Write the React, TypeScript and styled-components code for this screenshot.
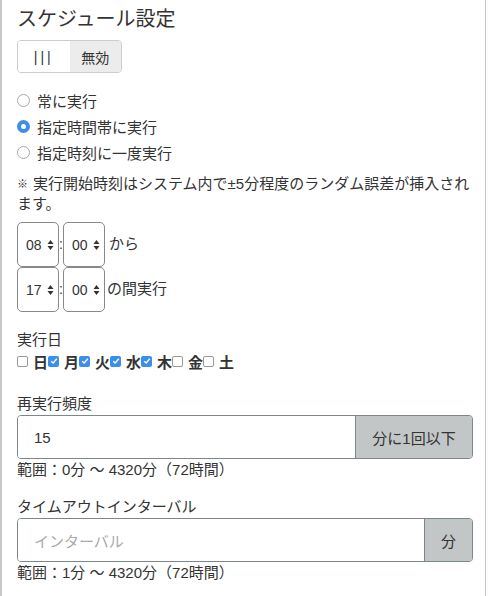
import * as React from 'react';
import styled, { createGlobalStyle } from 'styled-components';

const GlobalStyle = createGlobalStyle`
  html, body {
    margin: 0;
    padding: 0;
    background: #fff;
  }
  body {
    font-family: "Liberation Sans", "Noto Sans CJK JP", sans-serif;
    color: #333;
    font-size: 15px;
  }
`;

const days = [
  { label: '日', checked: false },
  { label: '月', checked: true },
  { label: '火', checked: true },
  { label: '水', checked: true },
  { label: '木', checked: true },
  { label: '金', checked: false },
  { label: '土', checked: false },
];

const radios = [
  { label: '常に実行', checked: false },
  { label: '指定時間帯に実行', checked: true },
  { label: '指定時刻に一度実行', checked: false },
];

const Spinner = () => (
  <svg width="7" height="12" viewBox="0 0 7 12">
    <path d="M3.5 1 L6.5 5 L0.5 5 Z" fill="#333" />
    <path d="M3.5 11 L6.5 7 L0.5 7 Z" fill="#333" />
  </svg>
);

const TimeSelect: React.FC<{ value: string }> = ({ value }) => (
  <SelectBox>
    <span>{value}</span>
    <Spinner />
  </SelectBox>
);

const App: React.FC = () => {
  return (
    <>
      <GlobalStyle />
      <Panel>
        <Title>スケジュール設定</Title>
        <Toggle>
          <ToggleHalf>|||</ToggleHalf>
          <ToggleHalf $off>無効</ToggleHalf>
        </Toggle>

        <RadioList>
          {radios.map((r) => (
            <RadioRow key={r.label}>
              <RadioDot $checked={r.checked} />
              {r.label}
            </RadioRow>
          ))}
        </RadioList>

        <Note>
          <Mark>※</Mark>
          <span>実行開始時刻はシステム内で±5分程度のランダム誤差が挿入され</span>
          <br />
          <span>ます。</span>
        </Note>

        <TimeBlock>
          <TimeRow>
            <TimeSelect value="08" />
            <Colon>:</Colon>
            <TimeSelect value="00" />
            <TimeText>から</TimeText>
          </TimeRow>
          <TimeRow>
            <TimeSelect value="17" />
            <Colon>:</Colon>
            <TimeSelect value="00" />
            <TimeText $tight>の間実行</TimeText>
          </TimeRow>
        </TimeBlock>

        <Label $top={18}>実行日</Label>
        <DayRow>
          {days.map((d) => (
            <DayItem key={d.label}>
              <CheckBox $checked={d.checked}>
                {d.checked && (
                  <svg width="8" height="8" viewBox="0 0 8 8">
                    <path d="M1.2 4.2 L3.2 6 L6.8 1.8" stroke="#fff" strokeWidth="1.4" fill="none" />
                  </svg>
                )}
              </CheckBox>
              <DayLabel>{d.label}</DayLabel>
            </DayItem>
          ))}
        </DayRow>

        <Label $top={22}>再実行頻度</Label>
        <InputGroup>
          <TextInput>15</TextInput>
          <Addon $width={116}>分に1回以下</Addon>
        </InputGroup>
        <Help>範囲：0分 〜 4320分（72時間）</Help>

        <Label $top={17}>タイムアウトインターバル</Label>
        <InputGroup>
          <TextInput $placeholder>インターバル</TextInput>
          <Addon $width={47}>分</Addon>
        </InputGroup>
        <Help>範囲：1分 〜 4320分（72時間）</Help>
      </Panel>
    </>
  );
};

const Panel = styled.div`
  box-sizing: border-box;
  width: 486px;
  min-height: 596px;
  border-left: 2px solid #c9c9c9;
  border-right: 1px solid #c9c9c9;
  padding: 6px 13px 0 15px;
`;

const Title = styled.h2`
  margin: 0;
  font-size: 20px;
  font-weight: normal;
  line-height: 26px;
`;

const Toggle = styled.div`
  display: flex;
  width: 105px;
  height: 33px;
  margin-top: 8px;
  border: 1px solid #ccc;
  border-radius: 4px;
  overflow: hidden;
  box-sizing: border-box;
`;

const ToggleHalf = styled.div<{ $off?: boolean }>`
  flex: 1;
  display: flex;
  align-items: center;
  justify-content: center;
  font-size: 14px;
  letter-spacing: ${(p) => (p.$off ? '0' : '3px')};
  background: ${(p) => (p.$off ? '#ececec' : '#fff')};
  color: #333;
`;

const RadioList = styled.div`
  margin-top: 14px;
  display: flex;
  flex-direction: column;
`;

const RadioRow = styled.div`
  display: flex;
  align-items: center;
  height: 26px;
`;

const RadioDot = styled.span<{ $checked: boolean }>`
  box-sizing: border-box;
  width: 13px;
  height: 13px;
  border-radius: 50%;
  margin-right: 7px;
  border: ${(p) => (p.$checked ? '4px solid #3b8eea' : '1px solid #aaa')};
  background: #fff;
`;

const Note = styled.p`
  margin: 9px 0 0;
  line-height: 20px;
`;

const Mark = styled.span`
  display: inline-block;
  font-size: 11px;
  font-weight: bold;
  color: #333;
  margin-right: 5px;
  vertical-align: 1px;
`;

const TimeBlock = styled.div`
  margin-top: 8px;
  display: flex;
  flex-direction: column;
`;

const TimeRow = styled.div`
  display: flex;
  align-items: center;
`;

const SelectBox = styled.div`
  box-sizing: border-box;
  width: 42px;
  height: 45px;
  border: 1px solid #888;
  border-radius: 5px;
  display: flex;
  align-items: center;
  justify-content: space-between;
  padding: 0 4px 0 8px;
  font-size: 14px;
`;

const Colon = styled.span`
  width: 4px;
  text-align: center;
  font-size: 14px;
  margin-bottom: 2px;
`;

const TimeText = styled.span<{ $tight?: boolean }>`
  margin-left: ${(p) => (p.$tight ? '2px' : '4px')};
  margin-bottom: 4px;
`;

const Label = styled.div<{ $top: number }>`
  margin-top: ${(p) => p.$top}px;
  line-height: 20px;
`;

const DayRow = styled.div`
  display: flex;
  align-items: center;
  height: 22px;
`;

const DayItem = styled.label`
  display: flex;
  align-items: center;
`;

const CheckBox = styled.span<{ $checked: boolean }>`
  box-sizing: border-box;
  width: 11px;
  height: 11px;
  border-radius: 2px;
  display: flex;
  align-items: center;
  justify-content: center;
  border: ${(p) => (p.$checked ? 'none' : '1px solid #999')};
  background: ${(p) => (p.$checked ? '#3b8eea' : '#fff')};
  margin-right: 5px;
`;

const DayLabel = styled.span`
  font-weight: bold;
  width: 15px;
`;

const InputGroup = styled.div`
  display: flex;
  width: 456px;
  height: 44px;
  margin-top: 1px;
  box-sizing: border-box;
  border: 1px solid #7b8788;
  border-radius: 4px;
  overflow: hidden;
`;

const TextInput = styled.div<{ $placeholder?: boolean }>`
  flex: 1;
  display: flex;
  align-items: center;
  padding-left: 16px;
  color: ${(p) => (p.$placeholder ? '#aaa' : '#333')};
  background: #fff;
`;

const Addon = styled.div<{ $width: number }>`
  width: ${(p) => p.$width}px;
  display: flex;
  align-items: center;
  justify-content: center;
  background: #c2c6c6;
  border-left: 1px solid #7b8788;
  color: #333;
`;

const Help = styled.div`
  margin-top: 1px;
  line-height: 20px;
`;

export default App;
